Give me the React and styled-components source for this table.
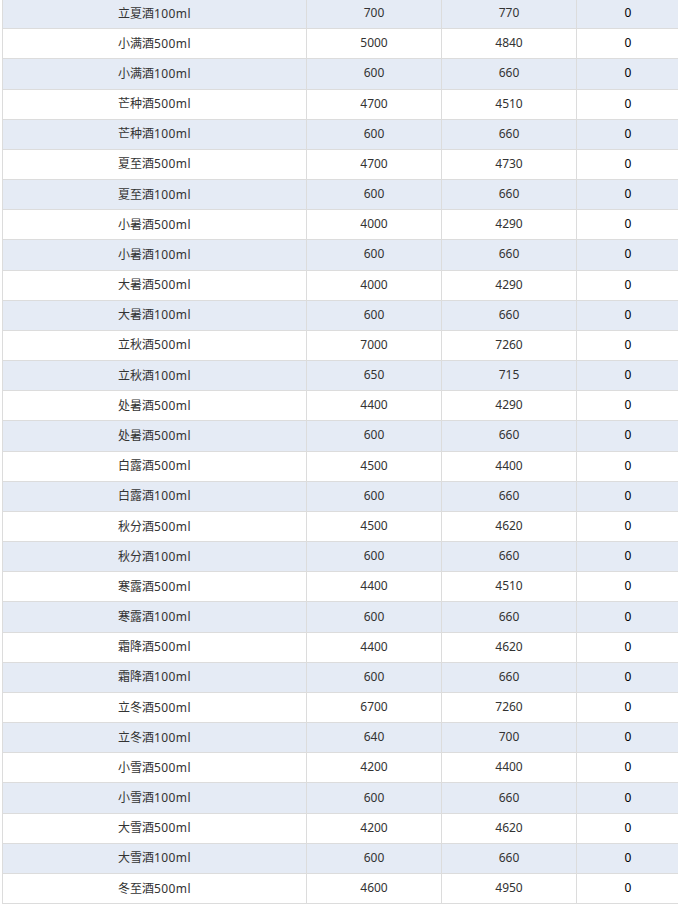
import React from "react";
import styled, { createGlobalStyle } from "styled-components";

const Global = createGlobalStyle`
  html, body { margin: 0; padding: 0; background: #fff; overflow: hidden; }
  body { font-family: "Noto Sans", "Noto Sans CJK SC", sans-serif; }
`;

const Page = styled.div`
  padding-left: 2px;
  margin-top: -2px;
  width: 678px;
  overflow: hidden;
`;

const Table = styled.table`
  border-collapse: collapse;
  table-layout: fixed;
  width: 677px;
  font-size: 12px;
`;

const Col = styled.col`
  width: ${(p) => p.$w}px;
`;

const Row = styled.tr`
  height: 30.18px;
  background: ${(p) => (p.$striped ? "#e5ebf5" : "#ffffff")};
`;

const Cell = styled.td`
  border: 1px solid #dcdcdc;
  padding: 0 0 1px 0;
  text-align: center;
  vertical-align: middle;
  color: ${(p) => (p.$dark ? "#000" : "#333")};
  line-height: 16px;
  white-space: nowrap;
`;

const Name = styled.span`
  font-family: "Noto Sans CJK SC", sans-serif;
  & > b {
    font-weight: normal;
    font-family: "Noto Sans", sans-serif;
    letter-spacing: 0.4px;
  }
`;

const data = [
  ["立夏酒", "100ml", 700, 770],
  ["小满酒", "500ml", 5000, 4840],
  ["小满酒", "100ml", 600, 660],
  ["芒种酒", "500ml", 4700, 4510],
  ["芒种酒", "100ml", 600, 660],
  ["夏至酒", "500ml", 4700, 4730],
  ["夏至酒", "100ml", 600, 660],
  ["小暑酒", "500ml", 4000, 4290],
  ["小暑酒", "100ml", 600, 660],
  ["大暑酒", "500ml", 4000, 4290],
  ["大暑酒", "100ml", 600, 660],
  ["立秋酒", "500ml", 7000, 7260],
  ["立秋酒", "100ml", 650, 715],
  ["处暑酒", "500ml", 4400, 4290],
  ["处暑酒", "500ml", 600, 660],
  ["白露酒", "500ml", 4500, 4400],
  ["白露酒", "100ml", 600, 660],
  ["秋分酒", "500ml", 4500, 4620],
  ["秋分酒", "100ml", 600, 660],
  ["寒露酒", "500ml", 4400, 4510],
  ["寒露酒", "100ml", 600, 660],
  ["霜降酒", "500ml", 4400, 4620],
  ["霜降酒", "100ml", 600, 660],
  ["立冬酒", "500ml", 6700, 7260],
  ["立冬酒", "100ml", 640, 700],
  ["小雪酒", "500ml", 4200, 4400],
  ["小雪酒", "100ml", 600, 660],
  ["大雪酒", "500ml", 4200, 4620],
  ["大雪酒", "100ml", 600, 660],
  ["冬至酒", "500ml", 4600, 4950],
];

export default function App() {
  return (
    <>
      <Global />
      <Page>
        <Table>
          <colgroup>
            <Col $w={304} />
            <Col $w={135} />
            <Col $w={135} />
            <Col $w={103} />
          </colgroup>
          <tbody>
            {data.map((r, i) => (
              <Row key={i} $striped={i % 2 === 0}>
                <Cell>
                  <Name>
                    {r[0]}
                    <b>{r[1]}</b>
                  </Name>
                </Cell>
                <Cell>{r[2]}</Cell>
                <Cell>{r[3]}</Cell>
                <Cell $dark>0</Cell>
              </Row>
            ))}
          </tbody>
        </Table>
      </Page>
    </>
  );
}
